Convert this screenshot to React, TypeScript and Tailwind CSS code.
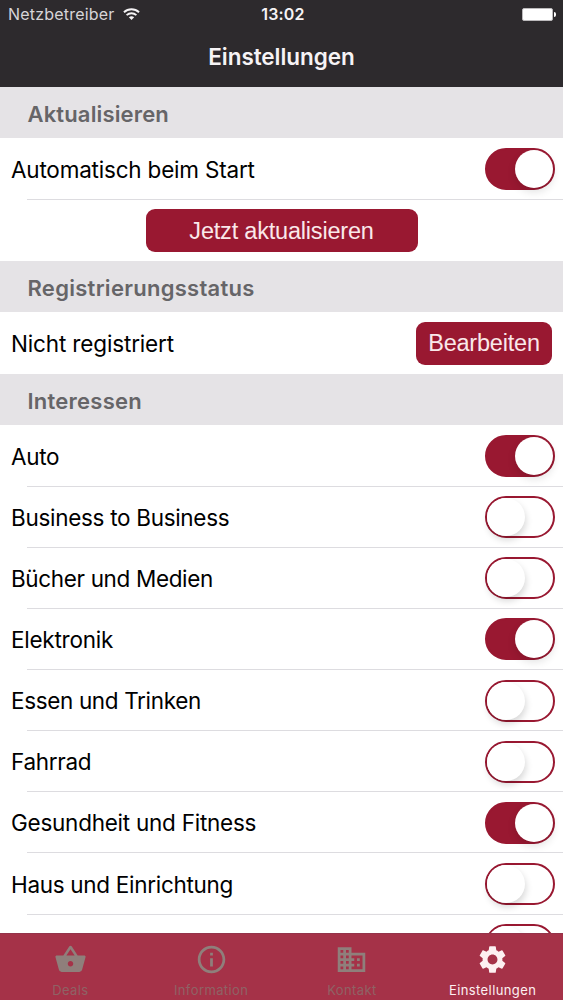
import React from "react";
import { MdShoppingBasket, MdInfoOutline, MdBusiness, MdSettings } from "react-icons/md";

function Toggle({ on }: { on: boolean }) {
  return (
    <span
      role="switch"
      aria-checked={on}
      className={`flex h-[42px] w-[70px] shrink-0 items-center rounded-full border-2 border-[#991831] ${
        on ? "justify-end bg-[#991831]" : "justify-start bg-white"
      }`}
    >
      <span
        className={`size-[38px] rounded-full bg-white ${
          on ? "shadow-[0_4px_8px_rgba(0,0,0,0.12)]" : "shadow-[1px_4px_7px_rgba(0,0,0,0.16)]"
        }`}
      />
    </span>
  );
}

function SectionHeader({ title, spacing }: { title: string; spacing: string }) {
  return (
    <h2 className={`flex h-[51px] shrink-0 items-center bg-[#e5e3e6] pt-[3px] pl-[27.5px] text-[22px] font-semibold text-[#666568] ${spacing}`}>
      {title}
    </h2>
  );
}

const interests = [
  { name: "Auto", on: true, spacing: "tracking-[-0.3px]" },
  { name: "Business to Business", on: false, spacing: "tracking-[-0.3px]" },
  { name: "Bücher und Medien", on: false, spacing: "tracking-[-0.35px]" },
  { name: "Elektronik", on: true, spacing: "tracking-[-0.25px]" },
  { name: "Essen und Trinken", on: false, spacing: "tracking-[-0.35px]" },
  { name: "Fahrrad", on: false, spacing: "tracking-[-0.3px]" },
  { name: "Gesundheit und Fitness", on: true, spacing: "tracking-[-0.25px]" },
  { name: "Haus und Einrichtung", on: false, spacing: "tracking-[-0.3px]" },
  { name: "", on: false, spacing: "" },
];

const tabs = [
  { label: "Deals", Icon: MdShoppingBasket, active: false },
  { label: "Information", Icon: MdInfoOutline, active: false },
  { label: "Kontakt", Icon: MdBusiness, active: false },
  { label: "Einstellungen", Icon: MdSettings, active: true },
];

export default function App() {
  return (
    <div className="flex h-[1000px] w-[563px] flex-col overflow-hidden bg-white font-['Inter',sans-serif] text-black">
      <header className="h-[87px] shrink-0 bg-[#2d2a2d] text-[#f6f3f5]">
        <div className="grid h-[28px] grid-cols-3 items-center pr-[7px] pl-[8px]">
          <div className="flex items-center gap-[8px] text-[16px] text-[#d7d5d8]">
            <span className="tracking-[0.2px]">Netzbetreiber</span>
            <svg className="-mt-px" width="17" height="14" viewBox="0 0 18 14" fill="none" stroke="#f4f2f4" strokeWidth="2">
              <path d="M1 5.1C5.5.9 12.5.9 17 5.1" />
              <path d="M3.8 8.2c3-2.7 7.4-2.7 10.4 0" />
              <path d="M6.2 10.5c1.6-1.4 4-1.4 5.6 0L9 13.3z" fill="#f4f2f4" stroke="none" />
            </svg>
          </div>
          <div className="pl-[2px] text-center text-[16px] font-semibold tracking-[0.2px]">13:02</div>
          <div className="flex items-center justify-end">
            <span className="h-[13px] w-[31px] rounded-[2px] border border-[#bcbabc] bg-white" />
            <span className="ml-px h-[5px] w-[2px] rounded-r-full bg-white" />
          </div>
        </div>
        <h1 className="pt-[13px] text-center text-[22.5px] leading-[32px] font-semibold tracking-[-0.05px]">Einstellungen</h1>
      </header>
      <main className="flex min-h-0 flex-1 flex-col overflow-hidden">
        <SectionHeader title="Aktualisieren" spacing="tracking-[0.15px]" />
        <div className="flex h-[61px] shrink-0 items-center justify-between pt-px pr-[8px] pl-[11px]">
          <span className="pt-[2px] text-[22.5px] tracking-[-0.2px]">Automatisch beim Start</span>
          <Toggle on />
        </div>
        <div className="ml-[27px] h-px shrink-0 bg-[#dddce0]" />
        <div className="flex h-[61px] shrink-0 items-center justify-center pb-px">
          <button className="h-[43px] w-[272px] rounded-[9px] bg-[#991831] pt-[3px] font-['Liberation_Sans',sans-serif] text-[23.5px] tracking-[-0.2px] text-[#fae8ea]">
            Jetzt aktualisieren
          </button>
        </div>
        <SectionHeader title="Registrierungsstatus" spacing="tracking-[0.28px]" />
        <div className="flex h-[62px] shrink-0 items-center justify-between pr-[11px] pl-[11px]">
          <span className="pt-[2px] text-[22.5px] tracking-[-0.15px]">Nicht registriert</span>
          <button className="h-[43px] w-[136px] rounded-[9px] bg-[#991831] pt-[2px] font-['Liberation_Sans',sans-serif] text-[23.5px] tracking-[-0.2px] text-[#fae8ea]">
            Bearbeiten
          </button>
        </div>
        <SectionHeader title="Interessen" spacing="tracking-[0.25px]" />
        <div className="shrink-0 pt-[0.4px]">
          {interests.map(({ name, on, spacing }) => (
            <div key={name} className="flex h-[61.15px] flex-col">
              <div className="flex flex-1 items-center justify-between pt-px pr-[8px] pl-[11px]">
                <span className={`pt-px text-[22.5px] ${spacing}`}>{name}</span>
                <Toggle on={on} />
              </div>
              <div className="ml-[27px] h-px shrink-0 bg-[#dddce0]" />
            </div>
          ))}
        </div>
      </main>
      <nav className="grid h-[67px] shrink-0 grid-cols-4 border-t border-[#94344a] bg-[#a53248]">
        {tabs.map(({ label, Icon, active }) => (
          <div key={label} className={`flex flex-col items-center pt-[9px] ${active ? "text-[#fdf0f1]" : "text-[#8f7f7b]"}`}>
            <Icon className="size-[33px]" />
            <span className={`mt-[6px] text-[13px] leading-[16px] tracking-[0.4px] ${active ? "" : "text-[#8f6265]"}`}>{label}</span>
          </div>
        ))}
      </nav>
    </div>
  );
}
